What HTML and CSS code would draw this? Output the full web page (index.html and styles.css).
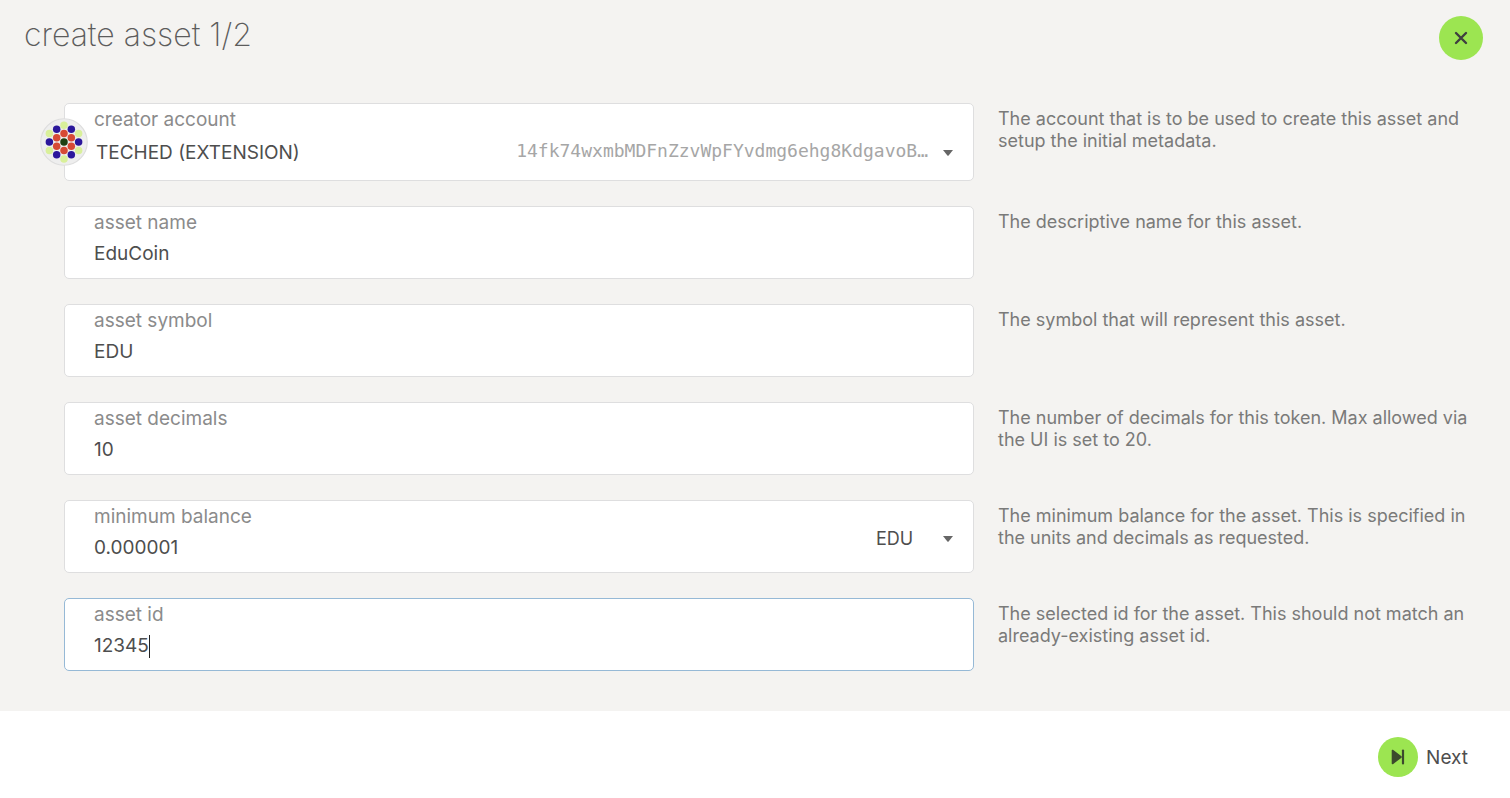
FILE: index.html
```html
<!DOCTYPE html>
<html lang="en">
<head>
<meta charset="utf-8">
<meta name="viewport" content="width=device-width, initial-scale=1">
<title>create asset</title>
<link rel="stylesheet" href="styles.css">
</head>
<body>
<form class="modal">
  <header class="modal-header">
    <h1 class="title">create asset 1/2</h1>
    <button class="close" type="button" aria-label="Close">
      <svg width="14" height="14" viewBox="0 0 14 14" aria-hidden="true"><path d="M2 2l10 10M12 2L2 12" fill="none" stroke="#3f3f3f" stroke-width="2.4" stroke-linecap="round"/></svg>
    </button>
  </header>
  <main class="content">
    <div class="row">
      <div class="field account">
        <label for="account">creator account</label>
        <select id="account" class="value"><option>TECHED (EXTENSION)</option></select>
        <span class="address">14fk74wxmbMDFnZzvWpFYvdmg6ehg8KdgavoB…</span>
        <svg class="arrow" width="10" height="6" viewBox="0 0 10 6" aria-hidden="true"><path d="M0 0h10L5.600 5.500q-.6.500-1.200 0z" fill="#666"/></svg>
        <svg class="identicon" width="48" height="48" viewBox="0 0 64 64" aria-hidden="true">
          <circle cx="32" cy="32" r="31" fill="#eee" stroke="#ddd" stroke-width="1.500"/>
          <g fill="#d9f09a"><circle cx="32" cy="9.500" r="5"/><circle cx="32" cy="54.500" r="5"/><circle cx="12.500" cy="20.750" r="5"/><circle cx="51.500" cy="20.750" r="5"/><circle cx="12.500" cy="43.250" r="5"/><circle cx="51.500" cy="43.250" r="5"/></g>
          <g fill="#2b179b"><circle cx="22.250" cy="15.100" r="5"/><circle cx="41.750" cy="15.100" r="5"/><circle cx="12.500" cy="32" r="5"/><circle cx="51.500" cy="32" r="5"/><circle cx="22.250" cy="48.900" r="5"/><circle cx="41.750" cy="48.900" r="5"/></g>
          <g fill="#d64a35"><circle cx="32" cy="20.750" r="5"/><circle cx="22.250" cy="26.400" r="5"/><circle cx="41.750" cy="26.400" r="5"/><circle cx="22.250" cy="37.600" r="5"/><circle cx="41.750" cy="37.600" r="5"/><circle cx="32" cy="43.250" r="5"/></g>
          <circle cx="32" cy="32" r="5" fill="#1e4012"/>
        </svg>
      </div>
      <p class="help">The account that is to be used to create this asset and setup the initial metadata.</p>
    </div>
    <div class="row">
      <div class="field">
        <label for="name">asset name</label>
        <input id="name" class="value" type="text" value="EduCoin">
      </div>
      <p class="help">The descriptive name for this asset.</p>
    </div>
    <div class="row">
      <div class="field">
        <label for="symbol">asset symbol</label>
        <input id="symbol" class="value" type="text" value="EDU">
      </div>
      <p class="help">The symbol that will represent this asset.</p>
    </div>
    <div class="row">
      <div class="field">
        <label for="decimals">asset decimals</label>
        <input id="decimals" class="value" type="text" value="10">
      </div>
      <p class="help">The number of decimals for this token. Max allowed via the UI is set to 20.</p>
    </div>
    <div class="row">
      <div class="field balance">
        <label for="balance">minimum balance</label>
        <input id="balance" class="value" type="text" value="0.000001">
        <select class="unit" aria-label="unit"><option>EDU</option></select>
        <svg class="arrow" width="10" height="6" viewBox="0 0 10 6" aria-hidden="true"><path d="M0 0h10L5.600 5.500q-.6.500-1.200 0z" fill="#666"/></svg>
      </div>
      <p class="help">The minimum balance for the asset. This is specified in the units and decimals as requested.</p>
    </div>
    <div class="row">
      <div class="field active">
        <label for="assetid">asset id</label>
        <div class="typing"><input id="assetid" class="value" type="text" value="12345"><span class="caret"></span></div>
      </div>
      <p class="help">The selected id for the asset. This should not match an already-existing asset id.</p>
    </div>
  </main>
  <footer class="actions">
    <button class="next" type="button">
      <span class="next-icon"><svg width="14" height="16" viewBox="0 0 14 16" aria-hidden="true"><path d="M1.500 1.500v13L10 8z" fill="#3c4a2d" stroke="#3c4a2d" stroke-width="1.600" stroke-linejoin="round"/><path d="M12 1.500v13" stroke="#3c4a2d" stroke-width="2.200" stroke-linecap="round"/></svg></span>
      Next
    </button>
  </footer>
</form>
</body>
</html>
```
FILE: styles.css
```css
* { box-sizing: border-box; }

body {
  margin: 0;
  background: #fff;
  color: #4e4e4e;
  font-family: Inter, "Liberation Sans", sans-serif;
  font-size: 19px;
}

button, input, select {
  margin: 0;
  padding: 0;
  border: 0;
  background: none;
  color: inherit;
  font: inherit;
  outline: none;
  appearance: none;
}

.modal {
  display: flex;
  flex-direction: column;
  min-height: 100vh;
}

.modal-header {
  display: flex;
  justify-content: space-between;
  align-items: flex-start;
  padding: 16px 27px 0 24px;
  background: #f4f3f1;
}

.title {
  margin: 0;
  color: #5c5c5c;
  font-size: 32px;
  font-weight: 200;
  line-height: 38px;
}

.close {
  display: grid;
  place-items: center;
  width: 44px;
  height: 44px;
  border-radius: 50%;
  background: #9ce551;
}

.content {
  display: flex;
  flex-direction: column;
  gap: 25px;
  padding: 43px 27px 40px 64px;
  background: #f4f3f1;
}

.row {
  display: grid;
  grid-template-columns: minmax(0, 910fr) minmax(0, 485fr);
  column-gap: 24px;
}

.field {
  display: grid;
  grid-template-columns: minmax(0, 1fr) auto 10px;
  grid-template-rows: 22px 40px;
  min-height: 73px;
  padding: 5px 20px 4px 29px;
  border: 1px solid #dededf;
  border-radius: 5px;
  background: #fff;
}

.field label {
  grid-area: 1 / 1;
  color: #8b8b8b;
  line-height: 22px;
}

.value {
  grid-area: 2 / 1 / 3 / -1;
  width: 100%;
  line-height: 40px;
}

.account {
  position: relative;
  grid-template-rows: 22px 44px;
  min-height: 78px;
}

.account .value { padding-left: 2px; }

.address {
  grid-area: 2 / 2;
  align-self: center;
  margin-right: 15px;
  color: #a6a6a6;
  font-family: "DejaVu Sans Mono", monospace;
  font-size: 18px;
  line-height: 24px;
  padding-bottom: 4px;
  pointer-events: none;
}

.arrow {
  grid-area: 2 / 3;
  align-self: center;
  pointer-events: none;
}

.identicon {
  position: absolute;
  top: 14px;
  left: -25px;
}

.balance .value { grid-column: 1; }

.unit {
  grid-area: 1 / 2 / 3 / -1;
  width: 77px;
  padding-top: 2px;
  font-size: 18px;
}

.balance .arrow { grid-row: 1 / 3; margin-top: 4px; }

.active { border-color: #96b9d6; }

.typing {
  display: flex;
  align-items: center;
  grid-area: 2 / 1 / 3 / -1;
}

.typing .value {
  width: auto;
  field-sizing: content;
  caret-color: transparent;
}

.caret {
  width: 1px;
  height: 23px;
  background: #222;
}

.help {
  margin: 0;
  padding-top: 5px;
  color: #7a7a79;
  font-size: 18px;
  line-height: 22px;
}

.actions {
  display: flex;
  justify-content: flex-end;
  padding: 26px 42px;
}

.next {
  display: flex;
  align-items: center;
  gap: 8px;
}

.next-icon {
  display: grid;
  place-items: center;
  width: 40px;
  height: 40px;
  border-radius: 50%;
  background: #9ce551;
}
```
